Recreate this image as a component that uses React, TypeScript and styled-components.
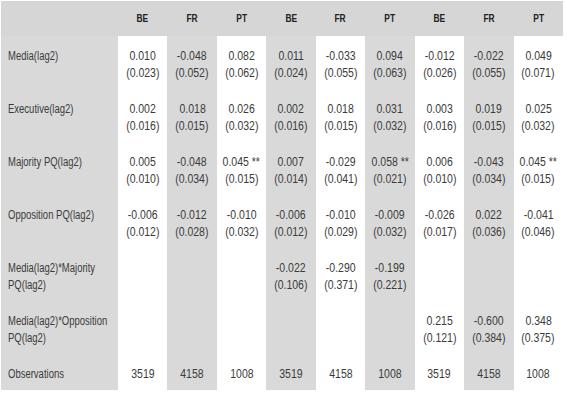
import React from "react";
import styled, { createGlobalStyle } from "styled-components";

const Global = createGlobalStyle`
  html, body { margin: 0; padding: 0; background: #ffffff; }
  body { font-family: "Liberation Sans", Arial, sans-serif; }
`;

const Page = styled.div`
  padding: 1px 0 0 1px;
`;

const Grid = styled.div`
  display: grid;
  grid-template-columns: 117px repeat(9, 1fr);
  width: 562px;
  color: #3b3b3b;
  font-size: 12.5px;
  line-height: 17px;
`;

const HeadCell = styled.div`
  background: #d6d6d6;
  height: 35px;
  display: flex;
  align-items: center;
  justify-content: center;
  font-weight: bold;
  font-size: 10.5px;
  color: #222222;
`;

const LabelCell = styled.div`
  background: #d9d9d9;
  padding: 12px 0 7px 7px;
  white-space: nowrap;
  overflow: hidden;
`;

const ValueCell = styled.div<{ $shade: boolean }>`
  background: ${(p) => (p.$shade ? "#d9d9d9" : "#ffffff")};
  padding: 12px 0 7px;
  text-align: center;
  white-space: nowrap;
`;

const Narrow = styled.span<{ $origin: "left" | "center"; $scale: number }>`
  display: inline-block;
  transform: scaleX(${(p) => p.$scale});
  transform-origin: ${(p) => p.$origin} center;
`;

const Line = styled.div``;

type Cell = [string, string] | [string] | null;

const heads = ["BE", "FR", "PT", "BE", "FR", "PT", "BE", "FR", "PT"];

const rows: { label: string[]; cells: Cell[] }[] = [
  {
    label: ["Media(lag2)"],
    cells: [
      ["0.010", "(0.023)"], ["-0.048", "(0.052)"], ["0.082", "(0.062)"],
      ["0.011", "(0.024)"], ["-0.033", "(0.055)"], ["0.094", "(0.063)"],
      ["-0.012", "(0.026)"], ["-0.022", "(0.055)"], ["0.049", "(0.071)"],
    ],
  },
  {
    label: ["Executive(lag2)"],
    cells: [
      ["0.002", "(0.016)"], ["0.018", "(0.015)"], ["0.026", "(0.032)"],
      ["0.002", "(0.016)"], ["0.018", "(0.015)"], ["0.031", "(0.032)"],
      ["0.003", "(0.016)"], ["0.019", "(0.015)"], ["0.025", "(0.032)"],
    ],
  },
  {
    label: ["Majority PQ(lag2)"],
    cells: [
      ["0.005", "(0.010)"], ["-0.048", "(0.034)"], ["0.045 **", "(0.015)"],
      ["0.007", "(0.014)"], ["-0.029", "(0.041)"], ["0.058 **", "(0.021)"],
      ["0.006", "(0.010)"], ["-0.043", "(0.034)"], ["0.045 **", "(0.015)"],
    ],
  },
  {
    label: ["Opposition PQ(lag2)"],
    cells: [
      ["-0.006", "(0.012)"], ["-0.012", "(0.028)"], ["-0.010", "(0.032)"],
      ["-0.006", "(0.012)"], ["-0.010", "(0.029)"], ["-0.009", "(0.032)"],
      ["-0.026", "(0.017)"], ["0.022", "(0.036)"], ["-0.041", "(0.046)"],
    ],
  },
  {
    label: ["Media(lag2)*Majority", "PQ(lag2)"],
    cells: [
      null, null, null,
      ["-0.022", "(0.106)"], ["-0.290", "(0.371)"], ["-0.199", "(0.221)"],
      null, null, null,
    ],
  },
  {
    label: ["Media(lag2)*Opposition", "PQ(lag2)"],
    cells: [
      null, null, null, null, null, null,
      ["0.215", "(0.121)"], ["-0.600", "(0.384)"], ["0.348", "(0.375)"],
    ],
  },
  {
    label: ["Observations"],
    cells: [
      ["3519"], ["4158"], ["1008"],
      ["3519"], ["4158"], ["1008"],
      ["3519"], ["4158"], ["1008"],
    ],
  },
];

export default function App() {
  return (
    <Page>
      <Global />
      <Grid>
        <HeadCell />
        {heads.map((h, i) => (
          <HeadCell key={i}>
            <Narrow $origin="center" $scale={0.8}>{h}</Narrow>
          </HeadCell>
        ))}
        {rows.map((r, ri) => (
          <React.Fragment key={ri}>
            <LabelCell>
              {r.label.map((t, ti) => (
                <Line key={ti}>
                  <Narrow $origin="left" $scale={0.76}>{t}</Narrow>
                </Line>
              ))}
            </LabelCell>
            {r.cells.map((c, ci) => (
              <ValueCell key={ci} $shade={ci % 2 === 1}>
                {c &&
                  c.map((t, ti) => (
                    <Line key={ti}>
                      <Narrow $origin="center" $scale={0.84}>{t}</Narrow>
                    </Line>
                  ))}
              </ValueCell>
            ))}
          </React.Fragment>
        ))}
      </Grid>
    </Page>
  );
}
